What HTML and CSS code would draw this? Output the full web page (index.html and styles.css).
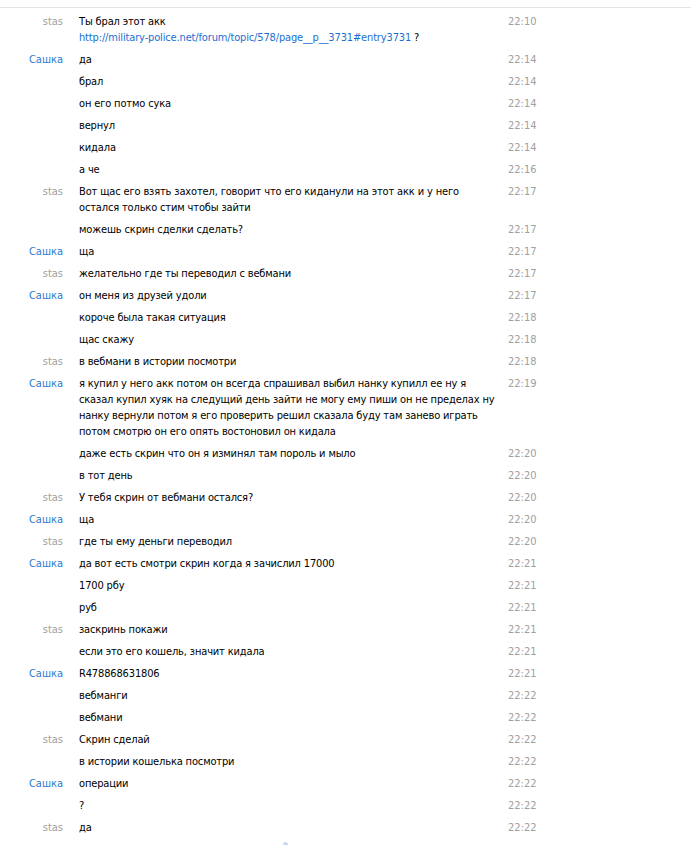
FILE: index.html
```html
<!DOCTYPE html>
<html lang="ru">

<head>
    <meta charset="UTF-8" />
    <meta name="viewport" content="width=device-width, initial-scale=1.0" />
    <title>История сообщений</title>
    <link rel="stylesheet" href="styles.css">
</head>

<body>
    <div class="topbar"></div>

    <div class="log">
        <div class="msg"><span class="who stas">stas</span><span class="text">Ты брал этот акк <a href="#">http://military-police.net/forum/topic/578/page__p__3731#entry3731</a> ?</span><span class="time">22:10</span></div>
        <div class="msg"><span class="who sashka">Сашка</span><span class="text">да</span><span class="time">22:14</span></div>
        <div class="msg"><span class="who"></span><span class="text">брал</span><span class="time">22:14</span></div>
        <div class="msg"><span class="who"></span><span class="text">он его потмо сука</span><span class="time">22:14</span></div>
        <div class="msg"><span class="who"></span><span class="text">вернул</span><span class="time">22:14</span></div>
        <div class="msg"><span class="who"></span><span class="text">кидала</span><span class="time">22:14</span></div>
        <div class="msg"><span class="who"></span><span class="text">а че</span><span class="time">22:16</span></div>
        <div class="msg"><span class="who stas">stas</span><span class="text">Вот щас его взять захотел, говорит что его киданули на этот акк и у него остался только стим чтобы зайти</span><span class="time">22:17</span></div>
        <div class="msg"><span class="who"></span><span class="text">можешь скрин сделки сделать?</span><span class="time">22:17</span></div>
        <div class="msg"><span class="who sashka">Сашка</span><span class="text">ща</span><span class="time">22:17</span></div>
        <div class="msg"><span class="who stas">stas</span><span class="text">желательно где ты переводил с вебмани</span><span class="time">22:17</span></div>
        <div class="msg"><span class="who sashka">Сашка</span><span class="text">он меня из друзей удоли</span><span class="time">22:17</span></div>
        <div class="msg"><span class="who"></span><span class="text">короче была такая ситуация</span><span class="time">22:18</span></div>
        <div class="msg"><span class="who"></span><span class="text">щас скажу</span><span class="time">22:18</span></div>
        <div class="msg"><span class="who stas">stas</span><span class="text">в вебмани в истории посмотри</span><span class="time">22:18</span></div>
        <div class="msg"><span class="who sashka">Сашка</span><span class="text">я купил у него акк потом он всегда спрашивал выбил нанку купилл ее ну я сказал купил хуяк на следущий день зайти не могу ему пиши он не пределах ну нанку вернули потом я его проверить решил сказала буду там занево играть потом смотрю он его опять востоновил он кидала</span><span class="time">22:19</span></div>
        <div class="msg"><span class="who"></span><span class="text">даже есть скрин что он я изминял там пороль и мыло</span><span class="time">22:20</span></div>
        <div class="msg"><span class="who"></span><span class="text">в тот день</span><span class="time">22:20</span></div>
        <div class="msg"><span class="who stas">stas</span><span class="text">У тебя скрин от вебмани остался?</span><span class="time">22:20</span></div>
        <div class="msg"><span class="who sashka">Сашка</span><span class="text">ща</span><span class="time">22:20</span></div>
        <div class="msg"><span class="who stas">stas</span><span class="text">где ты ему деньги переводил</span><span class="time">22:20</span></div>
        <div class="msg"><span class="who sashka">Сашка</span><span class="text">да вот есть смотри скрин когда я зачислил 17000</span><span class="time">22:21</span></div>
        <div class="msg"><span class="who"></span><span class="text">1700 рбу</span><span class="time">22:21</span></div>
        <div class="msg"><span class="who"></span><span class="text">руб</span><span class="time">22:21</span></div>
        <div class="msg"><span class="who stas">stas</span><span class="text">заскринь покажи</span><span class="time">22:21</span></div>
        <div class="msg"><span class="who"></span><span class="text">если это его кошель, значит кидала</span><span class="time">22:21</span></div>
        <div class="msg"><span class="who sashka">Сашка</span><span class="text">R478868631806</span><span class="time">22:21</span></div>
        <div class="msg"><span class="who"></span><span class="text">вебманги</span><span class="time">22:22</span></div>
        <div class="msg"><span class="who"></span><span class="text">вебмани</span><span class="time">22:22</span></div>
        <div class="msg"><span class="who stas">stas</span><span class="text">Скрин сделай</span><span class="time">22:22</span></div>
        <div class="msg"><span class="who"></span><span class="text">в истории кошелька посмотри</span><span class="time">22:22</span></div>
        <div class="msg"><span class="who sashka">Сашка</span><span class="text">операции</span><span class="time">22:22</span></div>
        <div class="msg"><span class="who"></span><span class="text">?</span><span class="time">22:22</span></div>
        <div class="msg"><span class="who stas">stas</span><span class="text">да</span><span class="time">22:22</span></div>
    </div>

    <div class="scroll-hint"></div>
</body>

</html>
```

FILE: styles.css
```css
body {
    font-family: "DejaVu Sans Condensed", "DejaVu Sans", Tahoma, sans-serif;
    font-stretch: condensed;
    font-size: 11px;
    color: #000;
    margin: 0;
    background: #fff;
    overflow: hidden;
}

.topbar {
    height: 7px;
    border-bottom: 1px solid #e4e4e4;
    margin-right: 1px;
}

.log {
    padding-top: 3px;
}

.msg {
    display: grid;
    grid-template-columns: 79px 429px auto;
    line-height: 16px;
    padding: 3px 0;
}

.who {
    text-align: right;
    padding-right: 16px;
}

.stas {
    color: #a0a0a0;
}

.sashka {
    color: #2b7bd0;
}

.text {
    padding-right: 10px;
    letter-spacing: -0.15px;
}

.text a {
    color: #1c6fd2;
    text-decoration: none;
    white-space: nowrap;
}

.time {
    color: #a0a0a0;
}

.scroll-hint {
    position: absolute;
    left: 283px;
    top: 842px;
    width: 5px;
    height: 3px;
    border-radius: 3px 3px 0 0;
    background: #c8d8ea;
}
```
